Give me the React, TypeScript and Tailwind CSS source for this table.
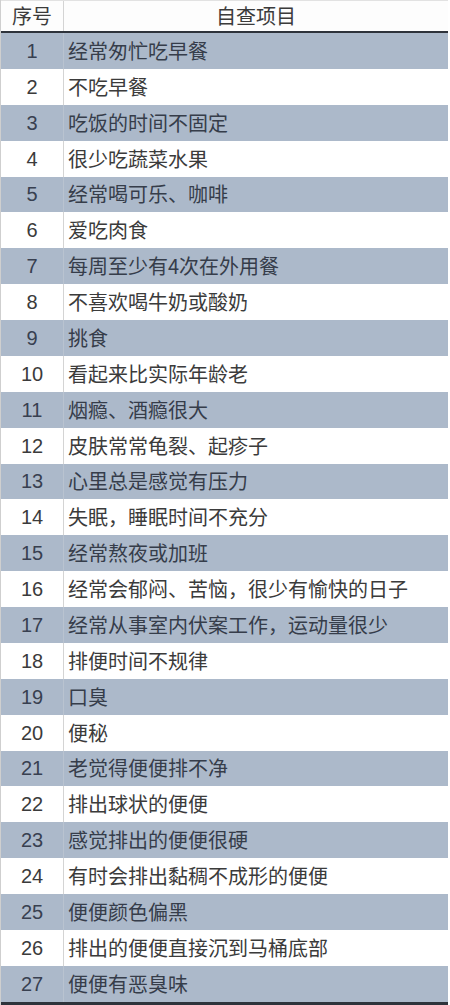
const items = [
  "经常匆忙吃早餐",
  "不吃早餐",
  "吃饭的时间不固定",
  "很少吃蔬菜水果",
  "经常喝可乐、咖啡",
  "爱吃肉食",
  "每周至少有4次在外用餐",
  "不喜欢喝牛奶或酸奶",
  "挑食",
  "看起来比实际年龄老",
  "烟瘾、酒瘾很大",
  "皮肤常常龟裂、起疹子",
  "心里总是感觉有压力",
  "失眠，睡眠时间不充分",
  "经常熬夜或加班",
  "经常会郁闷、苦恼，很少有愉快的日子",
  "经常从事室内伏案工作，运动量很少",
  "排便时间不规律",
  "口臭",
  "便秘",
  "老觉得便便排不净",
  "排出球状的便便",
  "感觉排出的便便很硬",
  "有时会排出黏稠不成形的便便",
  "便便颜色偏黑",
  "排出的便便直接沉到马桶底部",
  "便便有恶臭味",
];

const cjk = { fontFamily: '"Noto Sans CJK SC", "Liberation Sans", sans-serif' };
const num = { fontFamily: '"Liberation Sans", Arial, sans-serif' };

export default function App() {
  return (
    <div className="w-[450px] h-[1005px] bg-white text-[#3b3b3b] overflow-hidden">
      <div className="w-[448px] border-l border-[#cfcfcf]">
        {/* header */}
        <div className="flex h-[33px] border-t border-[#e2e2e2] border-b-2 border-b-[#2e333b] bg-[#fdfdfd]">
          <div className="w-[63px] border-r border-[#d4d4d4] flex items-center justify-center text-[20px] leading-none" style={cjk}>
            序号
          </div>
          <div className="flex-1 flex items-center justify-center text-[20px] leading-none" style={cjk}>
            自查项目
          </div>
        </div>

        {items.map((text, i) => {
          const blue = i % 2 === 0;
          return (
            <div
              key={i}
              className={`flex h-[35.89px] ${blue ? "bg-[#acb9ca]" : "bg-white"}`}
            >
              <div
                className={`w-[63px] shrink-0 border-r flex items-center justify-center text-[20px] leading-none ${
                  blue ? "border-[#b9c3d0] text-[#384050]" : "border-[#d4d4d4] text-[#3b3b3b]"
                }`}
                style={num}
              >
                {i + 1}
              </div>
              <div
                className={`flex-1 flex items-center pl-[4px] text-[20px] leading-none whitespace-nowrap ${
                  blue ? "text-[#363d4a]" : "text-[#3b3b3b]"
                }`}
                style={cjk}
              >
                {text}
              </div>
            </div>
          );
        })}

        <div className="h-[3px] bg-[#2e333b]" />
      </div>
    </div>
  );
}
